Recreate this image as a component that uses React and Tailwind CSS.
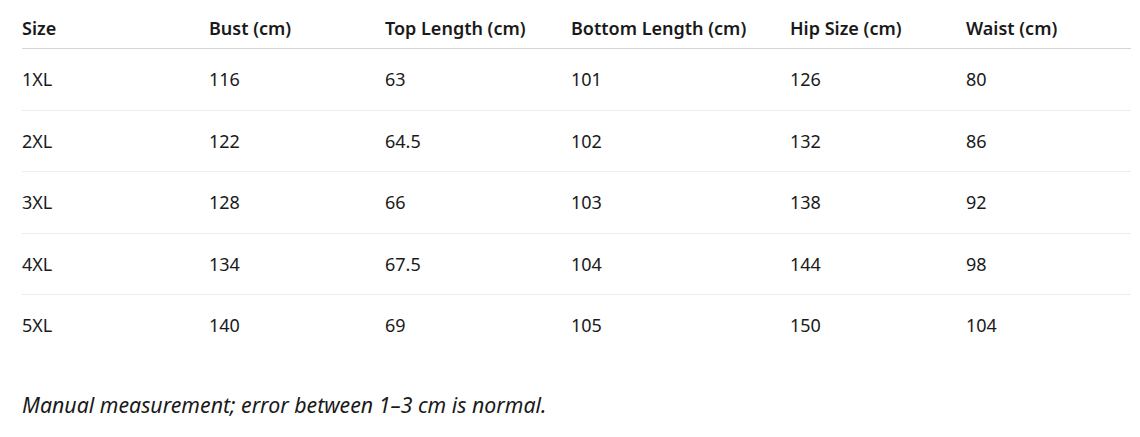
const headers = ['Size', 'Bust (cm)', 'Top Length (cm)', 'Bottom Length (cm)', 'Hip Size (cm)', 'Waist (cm)'];

const widths = ['w-[187px]', 'w-[176px]', 'w-[186px]', 'w-[219px]', 'w-[176px]', 'w-[165px]'];

const rows = [
  ['1XL', '116', '63', '101', '126', '80'],
  ['2XL', '122', '64.5', '102', '132', '86'],
  ['3XL', '128', '66', '103', '138', '92'],
  ['4XL', '134', '67.5', '104', '144', '98'],
  ['5XL', '140', '69', '105', '150', '104'],
];

export default function App() {
  return (
    <div className="min-h-screen bg-white px-[22px] pt-2 text-[#1a1a1a] [font-family:'Noto_Sans','Open_Sans',sans-serif]">
      <table className="w-[1109px] table-fixed border-collapse text-left text-[18px]">
        <thead>
          <tr className="border-b border-[#d4d4d4]">
            {headers.map((h, i) => (
              <th key={h} className={`${widths[i]} py-2 font-semibold leading-6`}>{h}</th>
            ))}
          </tr>
        </thead>
        <tbody>
          {rows.map((r, ri) => (
            <tr key={r[0]} className={ri < rows.length - 1 ? 'border-b border-[#ededed]' : ''}>
              {r.map((c, ci) => (
                <td key={ci} className="py-[18.25px] leading-6">{c}</td>
              ))}
            </tr>
          ))}
        </tbody>
      </table>
      <p className="mt-[35px] text-[21.3px] italic leading-7">
        Manual measurement; error between 1–3 cm is normal.
      </p>
    </div>
  );
}
